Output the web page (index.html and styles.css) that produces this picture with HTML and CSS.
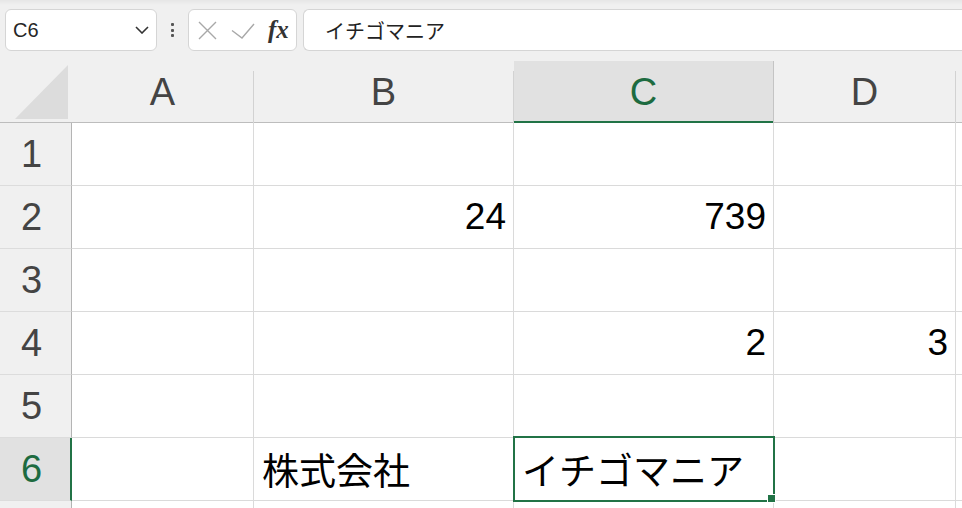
FILE: index.html
```html
<!DOCTYPE html>
<html lang="ja">
<head>
<meta charset="utf-8">
<title>Excel</title>
<link rel="stylesheet" href="styles.css">
</head>
<body>
<div class="app">
  <div class="toolbar">
    <div class="namebox">
      <span class="ref">C6</span>
      <svg class="chev" width="14" height="8" viewBox="0 0 14 8"><path d="M1 1 L7 7 L13 1" fill="none" stroke="#333" stroke-width="1.6"/></svg>
    </div>
    <div class="dots"><i></i><i></i><i></i></div>
    <div class="fxbox">
      <svg class="ic-x" width="19" height="19" viewBox="0 0 19 19"><path d="M1 1 L18 18 M18 1 L1 18" stroke="#a8a8a8" stroke-width="1.4" fill="none"/></svg>
      <svg class="ic-ok" width="24" height="16" viewBox="0 0 24 16"><path d="M1 7.5 L11 15 L23 1" stroke="#a8a8a8" stroke-width="1.4" fill="none"/></svg>
      <span class="fx">fx</span>
    </div>
    <div class="formula">イチゴマニア</div>
  </div>
  <div class="sheet">
    <div class="corner"><svg width="72" height="61" viewBox="0 0 72 61"><polygon points="68,4 68,58 15,58" fill="#dcdcdc"/></svg></div>
    <div class="colhead">A</div>
    <div class="colhead">B</div>
    <div class="colhead sel">C</div>
    <div class="colhead">D</div>
    <div class="colhead"></div>

    <div class="rowhead">1</div>
    <div class="cell"></div><div class="cell"></div><div class="cell"></div><div class="cell"></div><div class="cell"></div>

    <div class="rowhead">2</div>
    <div class="cell"></div><div class="cell num">24</div><div class="cell num">739</div><div class="cell"></div><div class="cell"></div>

    <div class="rowhead">3</div>
    <div class="cell"></div><div class="cell"></div><div class="cell"></div><div class="cell"></div><div class="cell"></div>

    <div class="rowhead">4</div>
    <div class="cell"></div><div class="cell"></div><div class="cell num">2</div><div class="cell num">3</div><div class="cell"></div>

    <div class="rowhead">5</div>
    <div class="cell"></div><div class="cell"></div><div class="cell"></div><div class="cell"></div><div class="cell"></div>

    <div class="rowhead sel">6</div>
    <div class="cell"></div><div class="cell txt">株式会社</div><div class="cell txt">イチゴマニア</div><div class="cell"></div><div class="cell"></div>

    <div class="rowhead"></div>
    <div class="cell"></div><div class="cell"></div><div class="cell"></div><div class="cell"></div><div class="cell"></div>

    <div class="selection"><span class="handle"></span></div>
  </div>
</div>
</body>
</html>
```

FILE: styles.css
```css
html, body {
  margin: 0;
  padding: 0;
  overflow: hidden;
  background: #f0f0f0;
}
.app {
  width: 962px;
  height: 508px;
  overflow: hidden;
  font-family: "Liberation Sans", "Noto Sans CJK JP", sans-serif;
}
.toolbar {
  height: 61px;
  box-sizing: border-box;
  padding: 9px 0 0 5px;
  display: flex;
  align-items: flex-start;
  background: linear-gradient(#e6e6e6, #f0f0f0 5px);
}
.toolbar > * { flex-shrink: 0; }
.namebox, .fxbox, .formula {
  height: 42px;
  box-sizing: border-box;
  background: #fff;
  border: 1px solid #d5d5d5;
  border-radius: 6px;
  display: flex;
  align-items: center;
}
.namebox {
  width: 152px;
  padding: 0 7px 0 7px;
  justify-content: space-between;
}
.ref {
  font-size: 20px;
  color: #262626;
  font-family: "Liberation Sans", sans-serif;
}
.dots {
  width: 31px;
  height: 42px;
  display: flex;
  flex-direction: column;
  align-items: center;
  justify-content: center;
  gap: 2.5px;
}
.dots i {
  display: block;
  width: 3px;
  height: 3px;
  background: #555;
  border-radius: 1px;
}
.fxbox {
  width: 109px;
  padding-left: 9px;
}
.ic-x { margin-top: 1px; }
.ic-ok { margin-left: 14px; margin-top: 1px; }
.fx {
  margin-left: 13px;
  font-family: "Liberation Serif", "DejaVu Serif", serif;
  font-style: italic;
  font-weight: bold;
  font-size: 25px;
  color: #333;
}
.formula {
  margin-left: 6px;
  width: 700px;
  padding-left: 21px;
  font-family: "Noto Sans CJK JP", sans-serif;
  font-size: 20px;
  color: #222;
  border-right: none;
  border-radius: 6px 0 0 6px;
}
.sheet {
  position: relative;
  display: grid;
  grid-template-columns: 72px 182px 260px 260px 182px 200px;
  grid-template-rows: 62px repeat(7, 63px);
  background: #fff;
}
.corner {
  background: #f0f0f0;
  border-bottom: 1px solid #bdbdbd;
  box-sizing: border-box;
  height: 62px;
}
.corner svg { display: block; }
.colhead {
  position: relative;
  background: #f0f0f0;
  box-sizing: border-box;
  border-bottom: 1px solid #bdbdbd;
  border-right: 1px solid transparent;
  display: flex;
  align-items: center;
  justify-content: center;
  font-size: 38px;
  color: #444;
  padding-top: 1px;
}
.colhead::after {
  content: "";
  position: absolute;
  right: -1px;
  top: 10px;
  bottom: 0;
  width: 1px;
  background: #d2d2d2;
}
.colhead.sel {
  background: #e1e1e1;
  color: #1d6b40;
  border-bottom: 2px solid #217346;
  padding-top: 2px;
}
.colhead.sel::after {
  top: 0;
  bottom: -2px;
  background: #c4c4c4;
}
.rowhead {
  background: #f0f0f0;
  box-sizing: border-box;
  border-bottom: 1px solid #dcdcdc;
  border-right: 1px solid #b4b4b4;
  display: flex;
  align-items: center;
  justify-content: center;
  padding-right: 8px;
  font-size: 38px;
  color: #444;
}
.rowhead.sel {
  background: #e1e1e1;
  color: #1d6b40;
  border-right: 2px solid #217346;
  padding-right: 7px;
}
.cell {
  box-sizing: border-box;
  border-right: 1px solid #dadada;
  border-bottom: 1px solid #dadada;
  display: flex;
  align-items: center;
  font-size: 37px;
  color: #000;
  white-space: nowrap;
}
.cell.num {
  justify-content: flex-end;
  padding-right: 7px;
}
.cell.txt {
  font-family: "Noto Sans CJK JP", sans-serif;
  padding-left: 8px;
}
.selection {
  position: absolute;
  left: 513px;
  top: 375px;
  width: 262px;
  height: 66px;
  box-sizing: border-box;
  border: 2px solid #217346;
}
.handle {
  position: absolute;
  right: -2px;
  bottom: -2px;
  width: 7px;
  height: 7px;
  background: #217346;
  box-shadow: 0 0 0 1px #fff;
}
```
